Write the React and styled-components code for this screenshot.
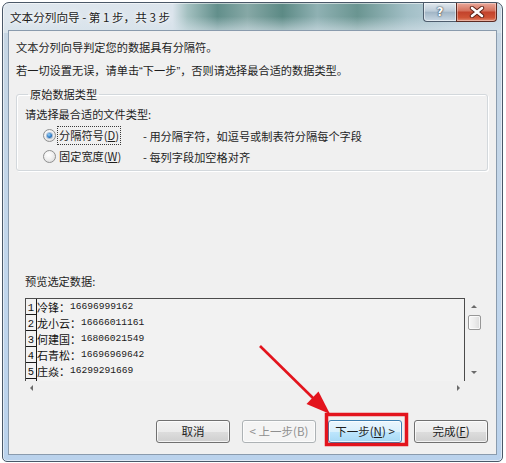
import React from 'react';
import styled, { createGlobalStyle } from 'styled-components';

const UI_FONT = '"Noto Sans CJK SC", "Noto Sans", sans-serif';
const MONO = '"Liberation Mono", "DejaVu Sans Mono", monospace';

const GlobalStyle = createGlobalStyle`
  html, body { margin: 0; padding: 0; background: #fff; }
  body { font-family: ${UI_FONT}; color: #1e1e1e; }
  * { box-sizing: border-box; }
`;

const Page = styled.div`
  position: relative;
  width: 506px;
  height: 463px;
  padding: 2px 3px 1px 2px;
`;

const Window = styled.div`
  display: flex;
  flex-direction: column;
  height: 460px;
  border: 1px solid #4a5868;
  border-radius: 7px 7px 5px 5px;
  padding: 0 5px 6px 5px;
  background:
    linear-gradient(to bottom, rgba(226, 234, 241, 0) 0%, rgba(226, 234, 241, 0) 45%, rgba(214, 226, 234, 0.75) 100%) top / 100% 30px no-repeat,
    linear-gradient(90deg, #dfe7ee 0%, #dbe4ec 34%, #a3c0c0 37%, #628f8b 43%, #86a8a6 49%, #5c8a85 56%, #8fb1b3 63%, #6a9591 71%, #a2bfc6 81%, #bfd2de 91%, #c9d9e5 100%) top / 100% 30px no-repeat,
    linear-gradient(to bottom, #c7d6e3 0%, #c1d6ec 60%, #bad2ec 100%);
  box-shadow: inset 0 0 0 1px rgba(255, 255, 255, 0.55);
`;

const TitleBar = styled.div`
  display: flex;
  align-items: center;
  justify-content: space-between;
  height: 27px;
  padding-left: 2px;
`;

const Title = styled.span`
  font-size: 11.6px;
  line-height: 16px;
  color: #1b1b1b;
  text-shadow: 0 0 6px rgba(255, 255, 255, 0.95), 0 0 3px rgba(255, 255, 255, 0.9);
`;

const Controls = styled.div`
  align-self: flex-start;
  display: flex;
  height: 19px;
`;

const HelpButton = styled.div`
  width: 33px;
  height: 19px;
  display: flex;
  align-items: center;
  justify-content: center;
  border: 1px solid #4d5c6c;
  border-top: none;
  border-right: none;
  border-radius: 0 0 0 4px;
  background: linear-gradient(to bottom, #e2e9ef 0%, #bccbd8 45%, #a2b6c6 52%, #c8d7e3 100%);
  box-shadow: inset 0 0 0 1px rgba(255, 255, 255, 0.5);
  color: #fff;
  font: bold 12px "DejaVu Sans", sans-serif;
  text-shadow: 0 0 2px #2c3a48, 0 0 1px #2c3a48;
`;

const CloseButton = styled.div`
  width: 41px;
  height: 19px;
  display: flex;
  align-items: center;
  justify-content: center;
  border: 1px solid #5b2a22;
  border-top: none;
  border-radius: 0 0 4px 0;
  background: linear-gradient(to bottom, #eaa99b 0%, #d5735f 42%, #c3432c 52%, #cf5436 82%, #e48d73 100%);
  box-shadow: inset 0 0 0 1px rgba(255, 255, 255, 0.35);
`;

const Client = styled.div`
  flex: 1;
  display: flex;
  flex-direction: column;
  background: #f0f0f0;
  border: 1px solid #8a9bad;
  padding: 0 8px 11px 7px;
`;

const Intro = styled.p`
  margin: ${p => p.$top}px 0 0;
  font-size: 11.2px;
  line-height: 20px;
  white-space: nowrap;
`;

const Quote = styled.span`
  font-family: "Liberation Sans", sans-serif;
`;

const Group = styled.fieldset`
  margin: 5px 0 0;
  padding: 3px 0 3px 8px;
  min-inline-size: 0;
  border: 1px solid #d3d8dc;
  border-radius: 3px;
  box-shadow: 1px 1px 0 #fff, inset 1px 1px 0 #fff;
`;

const Legend = styled.legend`
  margin-left: 3px;
  padding: 0 2px;
  font-size: 11.2px;
  line-height: 16px;
`;

const Prompt = styled.div`
  font-size: 11.2px;
  line-height: 18px;
`;

const RadioRow = styled.div`
  display: grid;
  grid-template-columns: 13px 85px auto;
  column-gap: 1px;
  align-items: center;
  height: 21px;
  margin-left: 18px;
  margin-top: ${p => p.$first ? 2 : 0}px;
  font-size: 11.2px;
  white-space: nowrap;
`;

const RadioCircle = styled.span`
  width: 13px;
  height: 13px;
  border-radius: 50%;
  border: 1px solid #8e8f8f;
  background: radial-gradient(circle at 40% 35%, #ffffff 0%, #f0f0f0 45%, #d6d6d6 100%);
  display: flex;
  align-items: center;
  justify-content: center;

  &::after {
    content: '';
    width: 5px;
    height: 5px;
    border-radius: 50%;
    display: ${p => p.$checked ? 'block' : 'none'};
    background: radial-gradient(circle at 40% 35%, #9bd3f6 0%, #2b79c6 55%, #17508f 100%);
    box-shadow: 0 0 0 1px rgba(40, 95, 160, 0.35);
  }
`;

const RadioLabel = styled.span`
  justify-self: start;
  padding: 0 1px;
  line-height: 17px;
  border: 1px dotted ${p => p.$focused ? '#3a3a3a' : 'transparent'};
`;

const Key = styled.span`
  text-decoration: underline;
  text-underline-offset: 1px;
`;

const SectionLabel = styled.div`
  margin: 101px 0 0 9px;
  font-size: 11.2px;
  line-height: 18px;
`;

const Preview = styled.div`
  display: grid;
  grid-template-columns: 440px 17px;
  grid-template-rows: 83px 14px;
  width: 457px;
  margin: 8px 0 0 9px;
`;

const DataArea = styled.div`
  border: 1px solid #4b4b4b;
  border-bottom: none;
  overflow: hidden;
  background: #f2f2f2;
`;

const DataRow = styled.div`
  display: flex;
  align-items: center;
  height: 16px;
  white-space: nowrap;
`;

const RowNum = styled.span`
  align-self: stretch;
  width: 11px;
  flex: none;
  display: flex;
  align-items: flex-end;
  justify-content: center;
  border-right: 1px solid #1a1a1a;
  border-bottom: 1px solid #1a1a1a;
  font: 10.5px/12px ${MONO};
  color: #111;
`;

const Name = styled.span`
  font-size: 11px;
  line-height: 16px;
  color: #111;
`;

const Phone = styled.span`
  font: 9.6px/16px ${MONO};
  color: #1a1a1a;
`;

const VScroll = styled.div`
  display: flex;
  flex-direction: column;
  align-items: center;
  padding-left: 1px;
`;

const ArrowBox = styled.div`
  height: ${p => p.$h || 17}px;
  display: flex;
  align-items: center;
  justify-content: center;
`;

const Tri = styled.span`
  width: 0;
  height: 0;
  border-style: solid;
  border-color: transparent;
  ${p => p.$dir === 'up' && 'border-width: 0 3px 3px 3px; border-bottom-color: #6a6a6a;'}
  ${p => p.$dir === 'down' && 'border-width: 3px 3px 0 3px; border-top-color: #6a6a6a;'}
  ${p => p.$dir === 'left' && 'border-width: 3px 3px 3px 0; border-right-color: #6a6a6a;'}
  ${p => p.$dir === 'right' && 'border-width: 3px 0 3px 3px; border-left-color: #6a6a6a;'}
`;

const Thumb = styled.div`
  width: 13px;
  height: 15px;
  margin-top: 1px;
  border: 1px solid #979797;
  border-radius: 2px;
  background: linear-gradient(to right, #f7f7f7 0%, #ececec 50%, #dcdcdc 100%);
  box-shadow: inset 0 0 0 1px rgba(255, 255, 255, 0.7);
`;

const Spacer = styled.div`
  flex: 1;
`;

const HScroll = styled.div`
  display: flex;
  align-items: center;
  justify-content: space-between;
  padding: 0 5px 0 5px;
`;

const ButtonRow = styled.div`
  display: flex;
  justify-content: flex-end;
  gap: 12px;
  margin-top: auto;
`;

const Button = styled.button`
  width: 74px;
  height: 23px;
  padding: 0;
  border-radius: 3px;
  font: 11.5px/1 ${UI_FONT};
  border: 1px solid ${p => p.$default ? '#3c7fb1' : p.disabled ? '#adb2b5' : '#707070'};
  color: ${p => p.disabled ? '#8f8f8f' : '#1e1e1e'};
  background: ${p => p.$default
    ? 'linear-gradient(to bottom, #eaf6fd 0%, #d9f0fc 50%, #bee6fd 51%, #a7d9f5 100%)'
    : p.disabled
      ? 'linear-gradient(to bottom, #f4f4f4 0%, #f4f4f4 100%)'
      : 'linear-gradient(to bottom, #f2f2f2 0%, #ebebeb 50%, #dddddd 51%, #cfcfcf 100%)'};
  box-shadow: inset 0 0 0 1px rgba(255, 255, 255, 0.75);
`;

const Annotation = styled.svg`
  position: absolute;
  left: 0;
  top: 0;
  pointer-events: none;
`;

const rows = [
  ['1', '冷锋：', '16696999162'],
  ['2', '龙小云：', '16666011161'],
  ['3', '何建国：', '16806021549'],
  ['4', '石青松：', '16696969642'],
  ['5', '庄焱：', '16299291669'],
  ['', '', ''],
];

export default function App() {
  return (
    <Page>
      <GlobalStyle />
      <Window>
        <TitleBar>
          <Title>文本分列向导 - 第 1 步，共 3 步</Title>
          <Controls>
            <HelpButton>?</HelpButton>
            <CloseButton>
              <svg width="16" height="12" viewBox="0 0 16 12">
                <path d="M3 2 L13 10 M13 2 L3 10" stroke="#5a1f14" strokeWidth="4.4" strokeLinecap="round" />
                <path d="M3 2 L13 10 M13 2 L3 10" stroke="#ffffff" strokeWidth="2.6" strokeLinecap="round" />
              </svg>
            </CloseButton>
          </Controls>
        </TitleBar>
        <Client>
          <Intro $top={6}>文本分列向导判定您的数据具有分隔符。</Intro>
          <Intro $top={3}>若一切设置无误，请单击<Quote>“</Quote>下一步<Quote>”</Quote>，否则请选择最合适的数据类型。</Intro>
          <Group>
            <Legend>原始数据类型</Legend>
            <Prompt>请选择最合适的文件类型:</Prompt>
            <RadioRow $first>
              <RadioCircle $checked />
              <RadioLabel $focused>分隔符号(<Key>D</Key>)</RadioLabel>
              <span>- 用分隔字符，如逗号或制表符分隔每个字段</span>
            </RadioRow>
            <RadioRow>
              <RadioCircle />
              <RadioLabel>固定宽度(<Key>W</Key>)</RadioLabel>
              <span>- 每列字段加空格对齐</span>
            </RadioRow>
          </Group>
          <SectionLabel>预览选定数据:</SectionLabel>
          <Preview>
            <DataArea>
              {rows.map(([num, name, phone], i) => (
                <DataRow key={i}>
                  <RowNum>{num}</RowNum>
                  <Name>{name}</Name>
                  <Phone>{phone}</Phone>
                </DataRow>
              ))}
            </DataArea>
            <VScroll>
              <ArrowBox $h={16}><Tri $dir="up" /></ArrowBox>
              <Thumb />
              <Spacer />
              <ArrowBox><Tri $dir="down" /></ArrowBox>
            </VScroll>
            <HScroll>
              <Tri $dir="left" />
              <Tri $dir="right" />
            </HScroll>
          </Preview>
          <ButtonRow>
            <Button>取消</Button>
            <Button disabled>&lt; 上一步(B)</Button>
            <Button $default>下一步(<Key>N</Key>) &gt;</Button>
            <Button>完成(<Key>F</Key>)</Button>
          </ButtonRow>
        </Client>
      </Window>
      <Annotation width="506" height="463" viewBox="0 0 506 463">
        <line x1="260" y1="346" x2="314" y2="399" stroke="#e3141d" strokeWidth="2.6" />
        <polygon points="330,414 306.5,404 318.5,391.5" fill="#e3141d" />
        <rect x="326.5" y="414.5" width="80" height="30" fill="none" stroke="#e3141d" strokeWidth="3.5" />
      </Annotation>
    </Page>
  );
}
